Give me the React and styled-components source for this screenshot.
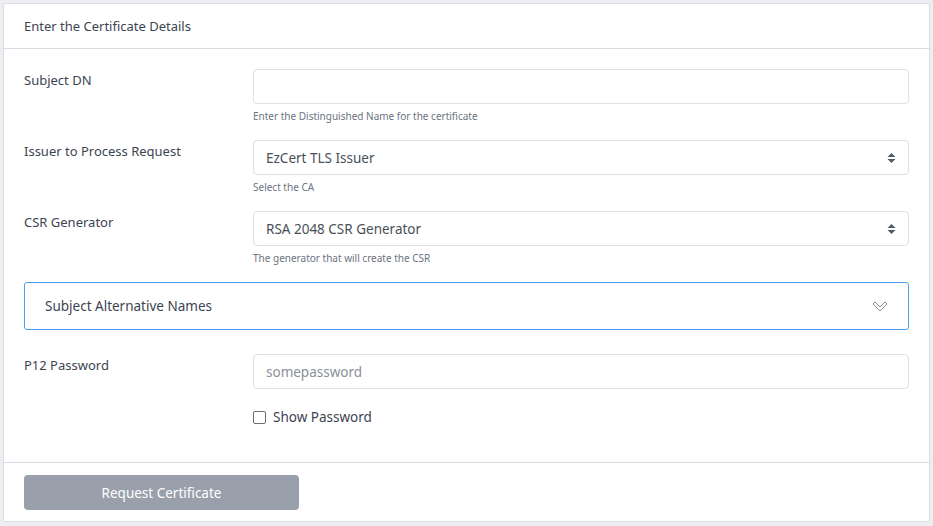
import React from 'react';
import styled, { createGlobalStyle } from 'styled-components';

const GlobalStyle = createGlobalStyle`
  body {
    margin: 0;
    background: #eceef1;
    font-family: "Noto Sans", "Open Sans", sans-serif;
    color: #3d4451;
  }
`;

const Page = styled.div`
  padding: 3px 3px 4px 3px;
`;

const Card = styled.div`
  background: #fff;
  border: 1px solid #dcdee3;
  border-radius: 3px;
`;

const Header = styled.div`
  height: 44px;
  display: flex;
  align-items: center;
  padding: 0 20px;
  font-size: 13px;
  border-bottom: 1px solid #d8dbe0;
`;

const Body = styled.div`
  padding: 20px 20px 36px 20px;
  display: flex;
  flex-direction: column;
`;

const Row = styled.div`
  display: grid;
  grid-template-columns: 229px 1fr;
  margin-bottom: ${p => p.$gap ?? 17}px;
`;

const Label = styled.label`
  font-size: 13px;
  line-height: 20px;
  padding-top: 1px;
`;

const Field = styled.div`
  display: flex;
  flex-direction: column;
`;

const Input = styled.input`
  box-sizing: border-box;
  height: 35px;
  border: 1px solid #dcdfe4;
  border-radius: 4px;
  padding: 0 12px;
  font-family: inherit;
  font-size: 13.5px;
  color: #495057;
  outline: none;
  &::placeholder {
    color: #8a9099;
  }
`;

const SelectBox = styled.div`
  box-sizing: border-box;
  height: 35px;
  border: 1px solid #dcdfe4;
  border-radius: 4px;
  padding: 0 12px;
  display: flex;
  align-items: center;
  justify-content: space-between;
  font-size: 13.5px;
  color: #495057;
`;

const Help = styled.small`
  font-size: 10px;
  color: #6c7480;
  margin-top: 5px;
  line-height: 14px;
`;

const Accordion = styled.div`
  box-sizing: border-box;
  height: 48px;
  border: 1px solid #4a9df3;
  border-radius: 3px;
  display: flex;
  align-items: center;
  justify-content: space-between;
  padding: 0 20px;
  font-size: 13.5px;
  margin-bottom: 24px;
`;

const CheckRow = styled.label`
  display: flex;
  align-items: center;
  gap: 7px;
  font-size: 13.5px;
  margin-top: 19px;
`;

const Check = styled.span`
  box-sizing: border-box;
  width: 13px;
  height: 13px;
  border: 1px solid #6b6f75;
  border-radius: 2px;
`;

const Footer = styled.div`
  border-top: 1px solid #d8dbe0;
  padding: 12px 20px 11px 20px;
`;

const Button = styled.button`
  width: 275px;
  height: 35px;
  border: none;
  border-radius: 4px;
  background: #9aa0ab;
  color: #fff;
  font-family: inherit;
  font-size: 13.5px;
`;

const Arrows = () => (
  <svg width="9" height="12" viewBox="0 0 9 12">
    <path d="M4.5 1 L8.5 5 H0.5 Z" fill="#505a68" />
    <path d="M4.5 11 L8.5 7 H0.5 Z" fill="#505a68" />
  </svg>
);

const Chevron = () => (
  <svg width="16" height="11" viewBox="0 0 16 11">
    <path d="M1 3 L3 1 L8 6 L13 1 L15 3 L8 10 Z" fill="none" stroke="#8a9099" strokeWidth="1" strokeLinejoin="round" />
  </svg>
);

export default function App() {
  return (
    <Page>
      <GlobalStyle />
      <Card>
        <Header>Enter the Certificate Details</Header>
        <Body>
          <Row>
            <Label>Subject DN</Label>
            <Field>
              <Input type="text" />
              <Help>Enter the Distinguished Name for the certificate</Help>
            </Field>
          </Row>
          <Row>
            <Label>Issuer to Process Request</Label>
            <Field>
              <SelectBox>EzCert TLS Issuer<Arrows /></SelectBox>
              <Help>Select the CA</Help>
            </Field>
          </Row>
          <Row>
            <Label>CSR Generator</Label>
            <Field>
              <SelectBox>RSA 2048 CSR Generator<Arrows /></SelectBox>
              <Help>The generator that will create the CSR</Help>
            </Field>
          </Row>
          <Accordion>
            Subject Alternative Names
            <Chevron />
          </Accordion>
          <Row $gap={0}>
            <Label>P12 Password</Label>
            <Field>
              <Input type="password" placeholder="somepassword" />
              <CheckRow>
                <Check />
                Show Password
              </CheckRow>
            </Field>
          </Row>
        </Body>
        <Footer>
          <Button>Request Certificate</Button>
        </Footer>
      </Card>
    </Page>
  );
}
